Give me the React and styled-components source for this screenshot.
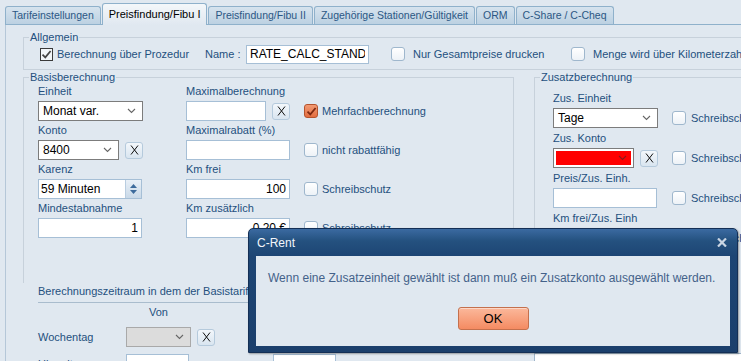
import React from "react";
import styled, { createGlobalStyle } from "styled-components";

const GlobalStyle = createGlobalStyle`
  html, body {
    margin: 0;
    padding: 0;
    background: #e0e8f0;
  }
  body {
    font-family: "Liberation Sans", Arial, sans-serif;
    font-size: 11px;
    color: #24507e;
  }
  * { box-sizing: border-box; }
`;

const Screen = styled.div`
  position: relative;
  width: 741px;
  height: 361px;
  overflow: hidden;
  background: #e0e8f0;
`;

const TabStrip = styled.div`
  display: flex;
  align-items: flex-end;
  height: 25px;
  margin-left: 5px;
  border-bottom: 1px solid #8fb1cb;
`;

const Tab = styled.div`
  position: relative;
  z-index: ${(p) => (p.$active ? 1 : 0)};
  height: ${(p) => (p.$active ? 22 : 18)}px;
  margin-right: 1px;
  margin-bottom: ${(p) => (p.$active ? -1 : 0)}px;
  padding: ${(p) => (p.$active ? "3px 6px 0" : "1px 6px 0")};
  border: 1px solid #8fb1cb;
  border-bottom: none;
  border-radius: 3px 3px 0 0;
  background: ${(p) =>
    p.$active
      ? "linear-gradient(#f4f7fa, #e0e8f0)"
      : "linear-gradient(#d6e3ee, #bcd1e2)"};
  color: ${(p) => (p.$active ? "#000" : "#2b5784")};
  font-size: ${(p) => (p.$active ? 11 : 10.5)}px;
  line-height: 15px;
  white-space: nowrap;
`;

const Panel = styled.div`
  width: 780px;
  height: 336px;
  margin-left: 5px;
  padding: 6px 0 0 17px;
  border-left: 1px solid #b5c7d8;
`;

const Group = styled.fieldset`
  margin: 0;
  padding: 0 0 ${(p) => p.$bottom || 0}px 5px;
  border: 1px solid #c7d1db;
  border-bottom: ${(p) => (p.$open ? "none" : "1px solid #c7d1db")};
  height: ${(p) => (p.$h ? `${p.$h}px` : "auto")};
  min-width: 0;
`;

const Legend = styled.legend`
  padding: 0 1px;
  line-height: 12px;
  font-size: 11px;
  color: #24507e;
`;

const AllgemeinRow = styled.div`
  display: grid;
  grid-template-columns: 165px 41px 145px 180px auto;
  align-items: center;
  height: 19px;
  margin-top: 1px;
  padding-left: 11px;
  white-space: nowrap;
`;

const CheckLabel = styled.label`
  display: flex;
  align-items: center;
  gap: ${(p) => p.$gap || 4}px;
  height: 20px;
  white-space: nowrap;
  color: #24507e;
`;

const Box = styled.span`
  display: inline-flex;
  align-items: center;
  justify-content: center;
  flex: none;
  width: ${(p) => (p.$variant === "classic" ? 13 : 14)}px;
  height: ${(p) => (p.$variant === "classic" ? 13 : 14)}px;
  border: 1px solid
    ${(p) =>
      p.$variant === "classic"
        ? "#3a3a3a"
        : p.$variant === "orange"
        ? "#b5532d"
        : "#9fb7cd"};
  border-radius: ${(p) => (p.$variant === "classic" ? 0 : 3)}px;
  background: ${(p) =>
    p.$variant === "classic"
      ? "#f2f5f8"
      : p.$variant === "orange"
      ? "linear-gradient(#f29a73, #e36d40)"
      : "linear-gradient(#ffffff, #edf2f7)"};
`;

function CheckBox({ variant = "plain", checked }) {
  const stroke = variant === "orange" ? "#7d2810" : "#444";
  return (
    <Box $variant={variant}>
      {checked && (
        <svg width="11" height="11" viewBox="0 0 11 11">
          <path
            d="M1.5 5.6 L4.3 8.4 L9.6 2"
            fill="none"
            stroke={stroke}
            strokeWidth="1.7"
          />
        </svg>
      )}
    </Box>
  );
}

const TextInput = styled.input`
  width: ${(p) => p.$w}px;
  height: ${(p) => p.$h || 20}px;
  margin: 0;
  padding: 0 3px;
  border: 1px solid #a6bfd6;
  background: #fff;
  font: inherit;
  font-size: 12px;
  color: #000;
  text-align: ${(p) => (p.$right ? "right" : "left")};
  outline: none;
`;

const SelectBox = styled.div`
  display: flex;
  align-items: center;
  justify-content: space-between;
  width: ${(p) => p.$w}px;
  height: 20px;
  padding: 0 6px 0 4px;
  border: 1px solid ${(p) => (p.$disabled ? "#a9a9a9" : "#7c7c7c")};
  background: ${(p) => (p.$disabled ? "#dcdcdc" : p.$fill || "#fff")};
  box-shadow: ${(p) => (p.$fill ? "inset 0 0 0 2px #fff" : "none")};
  color: #000;
  font-size: 12px;
  white-space: nowrap;
`;

function Select({ w, value, fill, disabled }) {
  return (
    <SelectBox $w={w} $fill={fill} $disabled={disabled}>
      <span>{value}</span>
      <svg width="9" height="6" viewBox="0 0 9 6">
        <polyline
          points="1,1 4.5,4.5 8,1"
          fill="none"
          stroke={fill ? "#8a1a1a" : "#666"}
          strokeWidth="1.1"
        />
      </svg>
    </SelectBox>
  );
}

const XButtonBox = styled.button`
  display: flex;
  align-items: center;
  justify-content: center;
  flex: none;
  width: 18px;
  height: 17px;
  margin: 0;
  padding: 0;
  border: 1px solid #b5cadc;
  border-radius: 3px;
  background: linear-gradient(#f3f7fb, #d9e5f0);
`;

function XButton() {
  return (
    <XButtonBox>
      <svg width="9" height="10" viewBox="0 0 9 10">
        <path d="M1 0.5 L8 9.5 M8 0.5 L1 9.5" stroke="#111" strokeWidth="1" />
      </svg>
    </XButtonBox>
  );
}

const SpinBox = styled.div`
  display: flex;
  width: ${(p) => p.$w}px;
  height: 20px;
  border: 1px solid #a6bfd6;
  background: #fff;
  color: #000;
  font-size: 12px;
`;

const SpinText = styled.span`
  flex: 1;
  padding-left: 2px;
  line-height: 18px;
`;

const SpinButton = styled.span`
  display: flex;
  flex-direction: column;
  align-items: center;
  justify-content: center;
  gap: 2px;
  width: 16px;
  border-left: 1px solid #b9cde0;
  background: linear-gradient(#e9f0f7, #c9d9e8);
`;

const Row = styled.div`
  display: flex;
  align-items: center;
  gap: 6px;
  height: 20px;
`;

const Field = styled.div`
  display: flex;
  flex-direction: column;
  gap: 2px;
`;

const Label = styled.div`
  height: 16px;
  line-height: 16px;
  white-space: nowrap;
  color: #24507e;
`;

const GroupsRow = styled.div`
  display: flex;
  gap: 20px;
  margin-top: 1px;
`;

const LeftColumn = styled.div`
  display: flex;
  flex-direction: column;
  width: 491px;
  flex: none;
`;

const RightColumn = styled.div`
  display: flex;
  flex-direction: column;
  flex: 1;
`;

const BasisGrid = styled.div`
  display: grid;
  grid-template-columns: 148px 118px 1fr;
  row-gap: 1px;
  align-items: end;
  padding-left: 9px;
`;

const ZusatzGrid = styled.div`
  display: grid;
  grid-template-columns: 119px 1fr;
  row-gap: 2px;
  align-items: end;
  padding: 7px 0 0 13px;
`;

const Zeitraum = styled.div`
  margin-left: 15px;
`;

const ZeitraumTitle = styled.div`
  height: 20px;
  line-height: 16px;
  padding-bottom: 4px;
  border-bottom: 1px solid #a9bccd;
  white-space: nowrap;
  color: #24507e;
`;

const ZeitGrid = styled.div`
  display: grid;
  grid-template-columns: 88px 147px 147px;
  grid-template-rows: 16px 20px 20px;
  row-gap: 7px;
  align-items: center;
  padding-top: 1px;
`;

const ColHead = styled.div`
  width: 65px;
  line-height: 16px;
  text-align: center;
  color: #24507e;
`;

const WhiteList = styled.div`
  height: 30px;
  border-left: 1px solid #9fb5ca;
  border-top: 1px solid #9fb5ca;
  background: #fff;
`;

const Dialog = styled.div`
  position: absolute;
  left: 248px;
  top: 228px;
  width: 490px;
  height: 125px;
  display: flex;
  flex-direction: column;
  padding: 0 7px 6px;
  border: 1px solid #142f55;
  border-radius: 5px 5px 0 0;
  background: linear-gradient(#3b6aa1 0, #24517f 12px, #1d4574 27px, #1b3f6c 100%);
  box-shadow: 1px 1px 2px rgba(0, 0, 0, 0.35);
  font-family: "Liberation Sans", Arial, sans-serif;
  font-size: 12px;
`;

const TitleBar = styled.div`
  display: flex;
  align-items: center;
  justify-content: space-between;
  height: 27px;
  padding: 0 3px 0 1px;
  color: #f2f6fa;
`;

const DialogBody = styled.div`
  display: flex;
  flex-direction: column;
  align-items: center;
  flex: 1;
  padding: 15px 12px 0;
  background: #e0e8f0;
`;

const Message = styled.div`
  align-self: flex-start;
  line-height: 14px;
  white-space: nowrap;
  color: #44628a;
`;

const OkButton = styled.button`
  width: 71px;
  height: 23px;
  margin-top: 22px;
  padding: 0;
  border: 1px solid #c4704d;
  border-radius: 3px;
  background: linear-gradient(#fbb89b, #f48b62);
  box-shadow: inset 0 1px 0 rgba(255, 255, 255, 0.45);
  font-family: inherit;
  font-size: 13px;
  color: #000;
`;

const tabs = [
  "Tarifeinstellungen",
  "Preisfindung/Fibu I",
  "Preisfindung/Fibu II",
  "Zugehörige Stationen/Gültigkeit",
  "ORM",
  "C-Share / C-Cheq",
];

function Spinner() {
  return (
    <SpinButton>
      <svg width="7" height="4" viewBox="0 0 7 4">
        <polygon points="0,4 3.5,0 7,4" fill="#3d6b9c" />
      </svg>
      <svg width="7" height="4" viewBox="0 0 7 4">
        <polygon points="0,0 7,0 3.5,4" fill="#3d6b9c" />
      </svg>
    </SpinButton>
  );
}

export default function App() {
  return (
    <Screen>
      <GlobalStyle />
      <TabStrip>
        {tabs.map((t, i) => (
          <Tab key={t} $active={i === 1}>
            {t}
          </Tab>
        ))}
      </TabStrip>

      <Panel>
        <Group $bottom={6}>
          <Legend>Allgemein</Legend>
          <AllgemeinRow>
            <CheckLabel>
              <CheckBox variant="classic" checked />
              Berechnung über Prozedur
            </CheckLabel>
            <span>Name :</span>
            <TextInput $w={123} $h={19} defaultValue="RATE_CALC_STANDARD" readOnly />
            <CheckLabel $gap={8}>
              <CheckBox />
              Nur Gesamtpreise drucken
            </CheckLabel>
            <CheckLabel $gap={8}>
              <CheckBox />
              Menge wird über Kilometerzahl berechnet
            </CheckLabel>
          </AllgemeinRow>
        </Group>

        <GroupsRow>
          <LeftColumn>
            <Group $open $h={212}>
              <Legend>Basisberechnung</Legend>
              <BasisGrid>
                <Field>
                  <Label>Einheit</Label>
                  <Row>
                    <Select w={105} value="Monat var." />
                  </Row>
                </Field>
                <Field>
                  <Label>Maximalberechnung</Label>
                  <Row>
                    <TextInput $w={80} readOnly />
                    <XButton />
                  </Row>
                </Field>
                <CheckLabel>
                  <CheckBox variant="orange" checked />
                  Mehrfachberechnung
                </CheckLabel>

                <Field>
                  <Label>Konto</Label>
                  <Row>
                    <Select w={81} value="8400" />
                    <XButton />
                  </Row>
                </Field>
                <Field>
                  <Label>Maximalrabatt (%)</Label>
                  <Row>
                    <TextInput $w={104} readOnly />
                  </Row>
                </Field>
                <CheckLabel>
                  <CheckBox />
                  nicht rabattfähig
                </CheckLabel>

                <Field>
                  <Label>Karenz</Label>
                  <Row>
                    <SpinBox $w={104}>
                      <SpinText>59 Minuten</SpinText>
                      <Spinner />
                    </SpinBox>
                  </Row>
                </Field>
                <Field>
                  <Label>Km frei</Label>
                  <Row>
                    <TextInput $w={104} $right defaultValue="100" readOnly />
                  </Row>
                </Field>
                <CheckLabel>
                  <CheckBox />
                  Schreibschutz
                </CheckLabel>

                <Field>
                  <Label>Mindestabnahme</Label>
                  <Row>
                    <TextInput $w={104} $right defaultValue="1" readOnly />
                  </Row>
                </Field>
                <Field>
                  <Label>Km zusätzlich</Label>
                  <Row>
                    <TextInput $w={104} $right defaultValue="0,20 €" readOnly />
                  </Row>
                </Field>
                <CheckLabel>
                  <CheckBox />
                  Schreibschutz
                </CheckLabel>
              </BasisGrid>
            </Group>

            <Zeitraum>
              <ZeitraumTitle>
                Berechnungszeitraum in dem der Basistarif berechnet wird
              </ZeitraumTitle>
              <ZeitGrid>
                <span />
                <ColHead>Von</ColHead>
                <ColHead>Bis</ColHead>
                <Label>Wochentag</Label>
                <Row>
                  <Select w={65} disabled value="" />
                  <XButton />
                </Row>
                <Row>
                  <Select w={65} disabled value="" />
                  <XButton />
                </Row>
                <Label>Uhrzeit</Label>
                <TextInput $w={63} readOnly />
                <TextInput $w={63} readOnly />
              </ZeitGrid>
            </Zeitraum>
          </LeftColumn>

          <RightColumn>
            <Group $open $h={282}>
              <Legend>Zusatzberechnung</Legend>
              <ZusatzGrid>
                <Field>
                  <Label>Zus. Einheit</Label>
                  <Row>
                    <Select w={105} value="Tage" />
                  </Row>
                </Field>
                <CheckLabel $gap={5}>
                  <CheckBox />
                  Schreibschutz
                </CheckLabel>

                <Field>
                  <Label>Zus. Konto</Label>
                  <Row>
                    <Select w={81} value="" fill="#ff0000" />
                    <XButton />
                  </Row>
                </Field>
                <CheckLabel $gap={5}>
                  <CheckBox />
                  Schreibschutz
                </CheckLabel>

                <Field>
                  <Label>Preis/Zus. Einh.</Label>
                  <Row>
                    <TextInput $w={104} readOnly />
                  </Row>
                </Field>
                <CheckLabel $gap={5}>
                  <CheckBox />
                  Schreibschutz
                </CheckLabel>

                <Field>
                  <Label>Km frei/Zus. Einh</Label>
                  <Row>
                    <TextInput $w={104} readOnly />
                  </Row>
                </Field>
                <CheckLabel $gap={5}>
                  <CheckBox />
                  Schreibschutz
                </CheckLabel>
              </ZusatzGrid>
            </Group>
            <WhiteList />
          </RightColumn>
        </GroupsRow>
      </Panel>

      <Dialog>
        <TitleBar>
          <span>C-Rent</span>
          <svg width="10" height="9" viewBox="0 0 10 9">
            <path d="M1 0.5 L9 8.5 M9 0.5 L1 8.5" stroke="#c9d5e3" strokeWidth="2.2" />
          </svg>
        </TitleBar>
        <DialogBody>
          <Message>
            Wenn eine Zusatzeinheit gewählt ist dann muß ein Zusatzkonto ausgewählt werden.
          </Message>
          <OkButton>OK</OkButton>
        </DialogBody>
      </Dialog>
    </Screen>
  );
}
